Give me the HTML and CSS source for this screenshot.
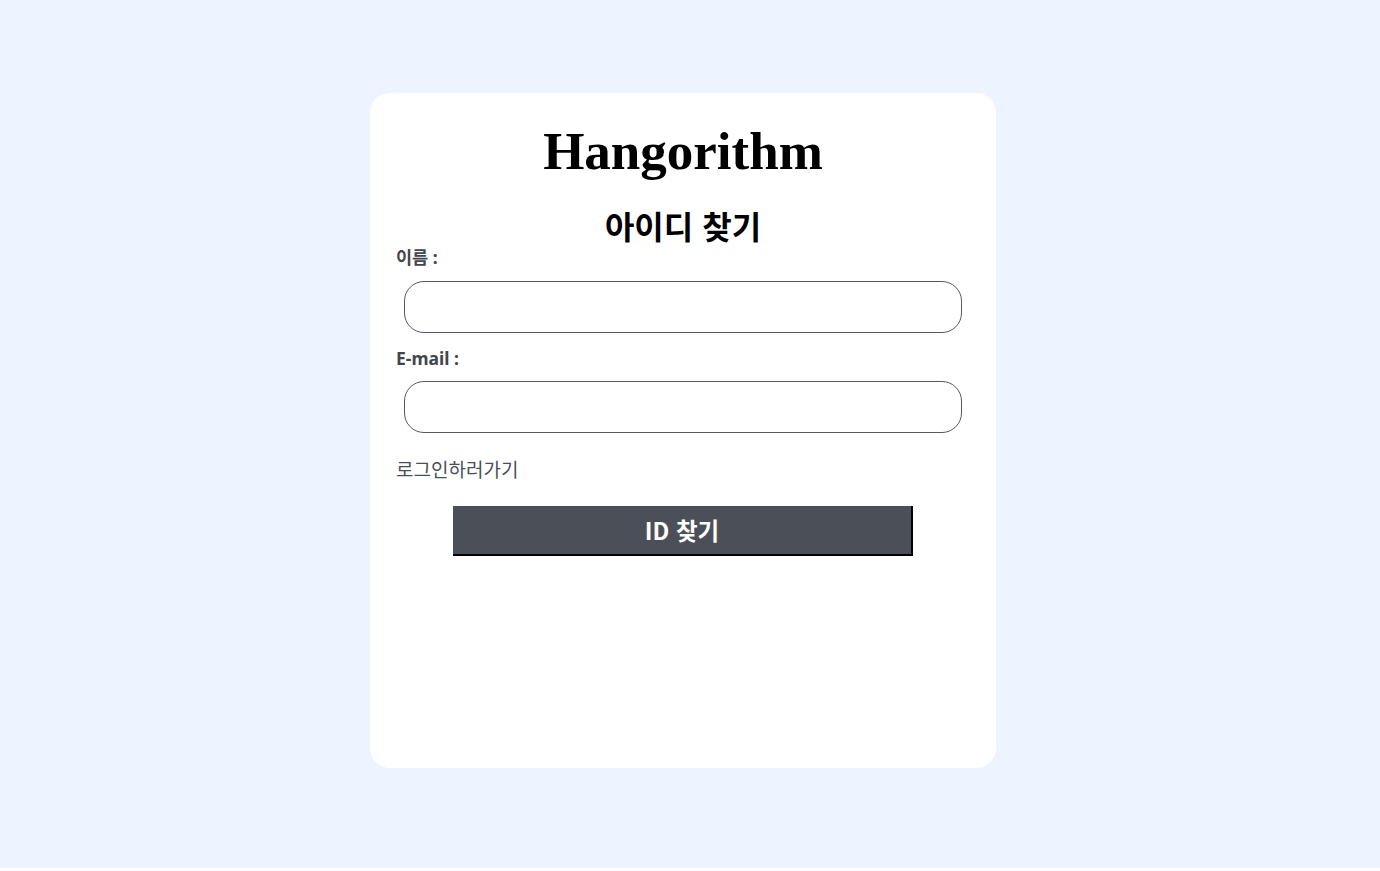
FILE: index.html
```html
<!DOCTYPE html>
<html lang="ko">
<head>
<meta charset="utf-8">
<title>아이디 찾기</title>
<link rel="stylesheet" href="styles.css">
</head>
<body>
<div class="page">
  <div class="card">
    <h1 class="logo">Hangorithm</h1>
    <h2 class="title">아이디 찾기</h2>
    <form class="form">
      <label class="label" for="name">이름 :</label>
      <input class="input" id="name" type="text">
      <label class="label" for="email">E-mail :</label>
      <input class="input" id="email" type="email">
      <a class="link" href="#">로그인하러가기</a>
      <button class="btn" type="button">ID 찾기</button>
    </form>
  </div>
</div>
</body>
</html>
```

FILE: styles.css
```css
html, body {
  margin: 0;
  padding: 0;
  background: #ffffff;
}
.page {
  height: 868px;
  background: #eef4ff;
  display: flex;
  justify-content: center;
  padding-top: 93px;
  padding-right: 14px;
  box-sizing: border-box;
}
.card {
  width: 626px;
  height: 675px;
  background: #ffffff;
  border-radius: 20px;
  box-sizing: border-box;
  padding: 0 26px;
  display: flex;
  flex-direction: column;
}
.logo {
  margin: 28px 0 0;
  font-family: "Liberation Serif", "DejaVu Serif", serif;
  font-weight: bold;
  font-size: 53px;
  line-height: 60px;
  text-align: center;
  color: #000;
}
.title {
  margin: 24px 0 0;
  font-family: "Noto Sans CJK KR", "Noto Sans", sans-serif;
  font-weight: bold;
  font-size: 32px;
  line-height: 40px;
  text-align: center;
  color: #000;
}
.form {
  display: flex;
  flex-direction: column;
  align-items: flex-start;
  margin-top: 1px;
}
.label {
  font-family: "Noto Sans", "Noto Sans CJK KR", sans-serif;
  font-weight: bold;
  font-size: 17.5px;
  line-height: 22px;
  color: #41464d;
}
.label + .input {
  margin-top: 13px;
}
.input {
  width: 558px;
  height: 52px;
  box-sizing: border-box;
  margin-left: 8px;
  border: 1px solid #555a60;
  border-radius: 20px;
  background: #fff;
  margin-bottom: 14px;
  font-size: 16px;
  padding: 0 14px;
}
.input + .label + .input {
  margin-top: 12px;
}
.link {
  margin-top: 9px;
  font-family: "Noto Sans CJK KR", "Noto Sans", sans-serif;
  font-size: 19px;
  line-height: 26px;
  color: #4a4f57;
  text-decoration: none;
}
.btn {
  align-self: center;
  margin-top: 24px;
  width: 460px;
  height: 50px;
  background: #4b5058;
  color: #ffffff;
  border: none;
  border-right: 2px solid #000;
  border-bottom: 2px solid #000;
  font-family: "Noto Sans CJK KR", "Noto Sans", sans-serif;
  font-weight: bold;
  font-size: 23.5px;
  padding: 0;
}
```
